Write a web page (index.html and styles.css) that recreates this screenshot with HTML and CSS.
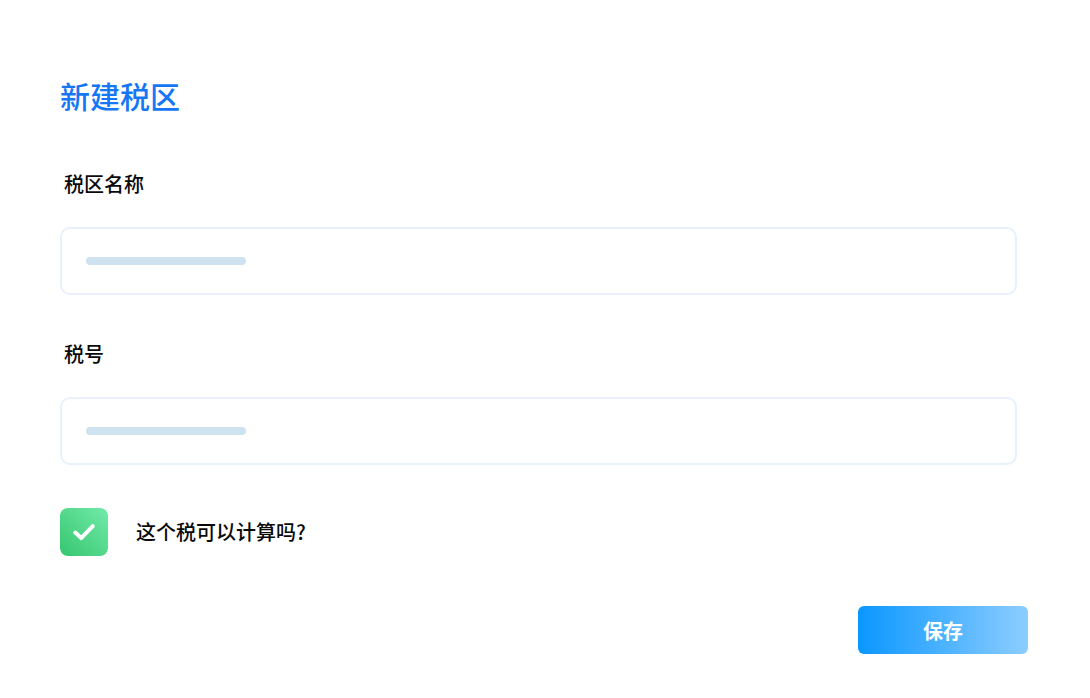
FILE: index.html
```html
<!DOCTYPE html>
<html lang="zh-CN">
<head>
    <meta charset="UTF-8">
    <meta name="viewport" content="width=device-width, initial-scale=1.0">
    <title>新建税区</title>
    <link rel="stylesheet" href="styles.css">
</head>
<body>
    <div id="page">
        <h1 class="title">新建税区</h1>

        <div class="field">
            <label class="field-label">税区名称</label>
            <div class="field-input">
                <span class="placeholder"></span>
            </div>
        </div>

        <div class="field field-last">
            <label class="field-label">税号</label>
            <div class="field-input">
                <span class="placeholder"></span>
            </div>
        </div>

        <div class="check-row">
            <span class="check-box">
                <svg width="28" height="28" viewBox="0 0 24 24">
                    <path d="M4.5 12.5 L9.6 17.2 L19.5 7" fill="none" stroke="#fff" stroke-width="3.4" stroke-linecap="round" stroke-linejoin="round"/>
                </svg>
            </span>
            <span class="check-text">这个税可以计算吗?</span>
        </div>

        <div class="actions">
            <button class="save-btn">保存</button>
        </div>
    </div>
</body>
</html>
```

FILE: styles.css
```css
*{
    margin: 0;
    padding: 0;
    box-sizing: border-box;
}
body{
    background: #fff;
    font-family: "Noto Sans CJK SC", "Noto Sans", sans-serif;
    color: #0a0a0a;
}
#page{
    width: 968px;
    margin-left: 60px;
    padding-top: 80px;
}
.title{
    font-size: 30px;
    line-height: 30px;
    font-weight: 500;
    color: #1677f5;
    margin-bottom: 64px;
}
.field{
    margin-bottom: 49px;
}
.field-label{
    display: block;
    padding-left: 4px;
    font-size: 20px;
    line-height: 20px;
    font-weight: 500;
    margin-bottom: 33px;
}
.field-input{
    width: 957px;
    height: 68px;
    border: 2px solid #e8f1fb;
    border-radius: 10px;
    padding-left: 24px;
    display: flex;
    align-items: center;
}
.placeholder{
    display: block;
    width: 160px;
    height: 8px;
    border-radius: 4px;
    background: #cfe2ef;
}
.field-last{
    margin-bottom: 43px;
}
.check-row{
    display: flex;
    align-items: center;
    gap: 28px;
}
.check-box{
    width: 48px;
    height: 48px;
    border-radius: 8px;
    background: linear-gradient(45deg, #36c66f, #72eaa9);
    display: flex;
    align-items: center;
    justify-content: center;
}
.check-text{
    font-size: 20px;
    line-height: 48px;
    font-weight: 500;
}
.actions{
    display: flex;
    justify-content: flex-end;
    margin-top: 50px;
}
.save-btn{
    width: 170px;
    height: 48px;
    border: none;
    border-radius: 6px;
    background: linear-gradient(90deg, #0a97ff, #8dcdff);
    color: #fff;
    font-family: "Noto Sans CJK SC", sans-serif;
    font-size: 20px;
    font-weight: 700;
    cursor: pointer;
}
```
